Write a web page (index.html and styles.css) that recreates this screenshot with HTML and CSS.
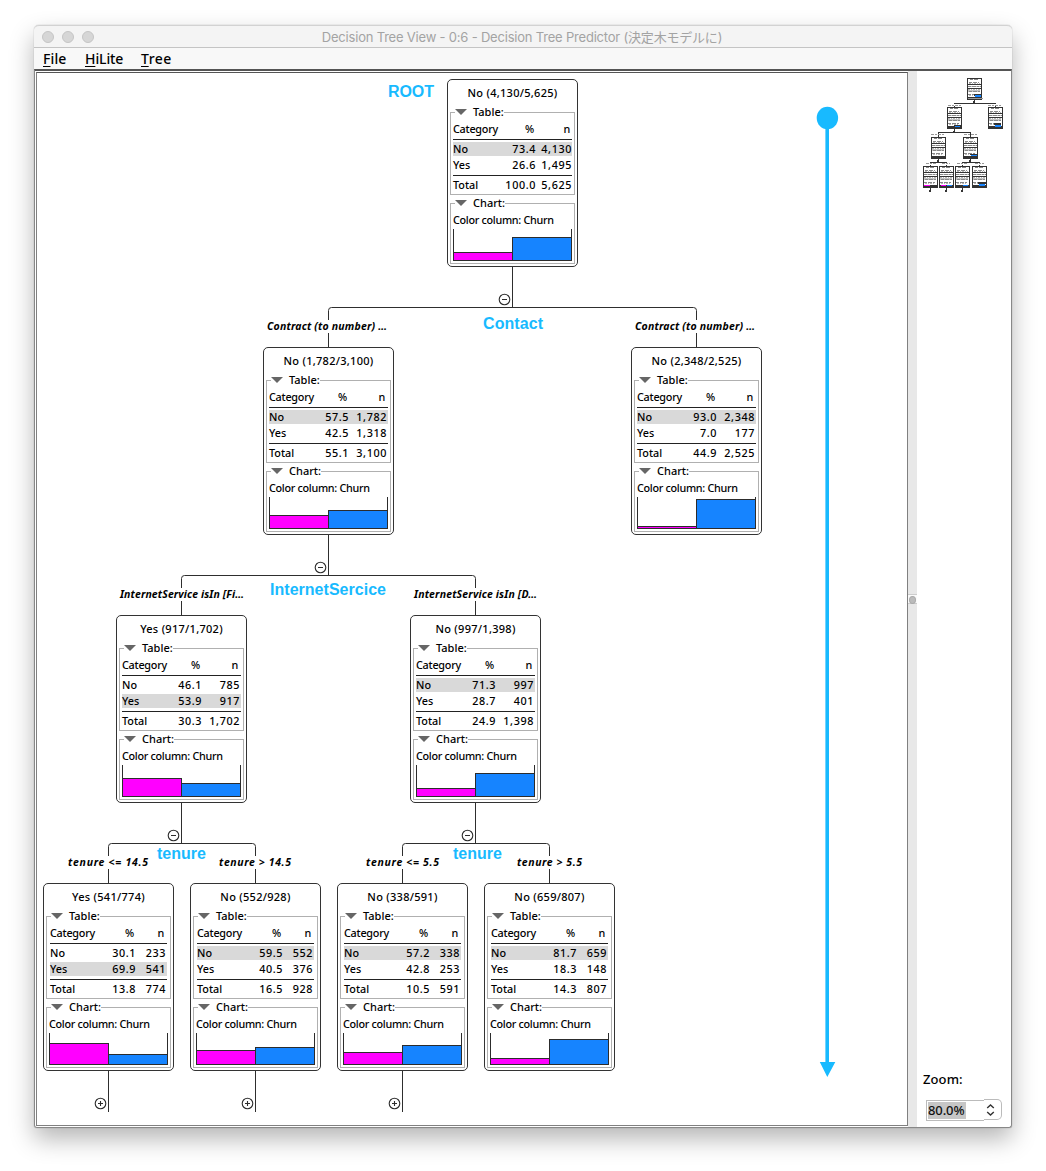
FILE: index.html
```html
<!DOCTYPE html>
<html lang="en">
<head>
<meta charset="utf-8">
<title>Decision Tree View</title>
<link rel="stylesheet" href="styles.css">
</head>
<body>
<div class="window">
  <header class="titlebar">
    <div class="lights"><i></i><i></i><i></i></div>
    <h1>Decision Tree View - 0:6 - Decision Tree Predictor (決定木モデルに)</h1>
  </header>
  <nav class="menubar">
    <span class="m-file"><u>F</u>ile</span><span class="m-hilite"><u>H</u>iLite</span><span class="m-tree"><u>T</u>ree</span>
  </nav>
  <div class="split">
    <main class="canvas">
      <svg class="edges" width="870" height="1052" viewBox="37 73 870 1052">
        <g class="wire">
          <path d="M512.5 267V307.500M328.500 347V310.500Q328.500 307.500 331.500 307.500H693.500Q696.500 307.500 696.500 310.500V347"/>
          <path d="M328.500 535V575.500M181.500 615V578.500Q181.500 575.500 184.500 575.500H472.500Q475.500 575.500 475.500 578.500V615"/>
          <path d="M181.500 803V843.500M108.500 883V846.500Q108.500 843.500 111.500 843.500H252.500Q255.500 843.500 255.500 846.500V883"/>
          <path d="M475.500 803V843.500M402.500 883V846.500Q402.500 843.500 405.500 843.500H546.500Q549.500 843.500 549.500 846.500V883"/>
          <path d="M108.500 1071V1112M255.500 1071V1112M402.500 1071V1112"/>
        </g>
        <g class="knob">
          <path d="M499.200 299.500a5.300 5.300 0 1 0 10.600 0a5.300 5.300 0 1 0-10.600 0M502 299.500h5"/>
          <path d="M315.200 567.500a5.300 5.300 0 1 0 10.600 0a5.300 5.300 0 1 0-10.600 0M318 567.500h5"/>
          <path d="M168.200 835.500a5.300 5.300 0 1 0 10.600 0a5.300 5.300 0 1 0-10.600 0M171 835.500h5"/>
          <path d="M462.200 835.500a5.300 5.300 0 1 0 10.600 0a5.300 5.300 0 1 0-10.600 0M465 835.500h5"/>
          <path d="M95.200 1103.500a5.300 5.300 0 1 0 10.600 0a5.300 5.300 0 1 0-10.600 0M98 1103.500h5M100.500 1101v5"/>
          <path d="M242.200 1103.500a5.300 5.300 0 1 0 10.600 0a5.300 5.300 0 1 0-10.600 0M245 1103.500h5M247.500 1101v5"/>
          <path d="M389.200 1103.500a5.300 5.300 0 1 0 10.600 0a5.300 5.300 0 1 0-10.600 0M392 1103.500h5M394.500 1101v5"/>
        </g>
        <path fill="#fff" d="M266 320h123v13h-123zM634 320h123v13h-123zM119 588h126v13h-126zM413 588h126v13h-126zM66 856h84v13h-84zM217 856h76v13h-76zM364 856h77v13h-77zM515 856h69v13h-69z"/>
        <g class="cond">
          <text x="267" y="330" textLength="120">Contract (to number) …</text>
          <text x="635" y="330" textLength="120">Contract (to number) …</text>
          <text x="120" y="598" textLength="124">InternetService isIn [Fi…</text>
          <text x="414" y="598" textLength="123">InternetService isIn [D…</text>
          <text x="68" y="866" textLength="80">tenure &lt;= 14.5</text>
          <text x="219" y="866" textLength="72">tenure &gt; 14.5</text>
          <text x="366" y="866" textLength="73">tenure &lt;= 5.5</text>
          <text x="517" y="866" textLength="65">tenure &gt; 5.5</text>
        </g>
        <g class="note">
          <text x="388" y="97" textLength="46">ROOT</text>
          <text x="483" y="329" textLength="60">Contact</text>
          <text x="270" y="595" textLength="116">InternetSercice</text>
          <text x="157" y="859" textLength="49">tenure</text>
          <text x="453" y="859" textLength="49">tenure</text>
          <ellipse cx="827.400" cy="118" rx="10.700" ry="11.200"/>
          <path d="M825.400 118h3.600v944h6.300L827.300 1077L819.800 1062h5.600z"/>
        </g>
      </svg>

      <article class="node root" style="left:410px;top:6px">
        <h2>No (4,130/5,625)</h2>
        <section><h3>Table:</h3>
          <div class="row head"><span>Category</span><span>%</span><span>n</span></div>
          <div class="row hit"><span>No</span><b>73.4</b><b>4,130</b></div>
          <div class="row"><span>Yes</span><b>26.6</b><b>1,495</b></div>
          <div class="row total"><span>Total</span><b>100.0</b><b>5,625</b></div>
        </section>
        <section><h3>Chart:</h3><p>Color column: Churn</p>
          <div class="chart"><i style="height:8px"></i><i style="height:23px"></i></div>
        </section>
      </article>

      <article class="node" style="left:226px;top:274px">
        <h2>No (1,782/3,100)</h2>
        <section><h3>Table:</h3>
          <div class="row head"><span>Category</span><span>%</span><span>n</span></div>
          <div class="row hit"><span>No</span><b>57.5</b><b>1,782</b></div>
          <div class="row"><span>Yes</span><b>42.5</b><b>1,318</b></div>
          <div class="row total"><span>Total</span><b>55.1</b><b>3,100</b></div>
        </section>
        <section><h3>Chart:</h3><p>Color column: Churn</p>
          <div class="chart"><i style="height:13px"></i><i style="height:18px"></i></div>
        </section>
      </article>

      <article class="node" style="left:594px;top:274px">
        <h2>No (2,348/2,525)</h2>
        <section><h3>Table:</h3>
          <div class="row head"><span>Category</span><span>%</span><span>n</span></div>
          <div class="row hit"><span>No</span><b>93.0</b><b>2,348</b></div>
          <div class="row"><span>Yes</span><b>7.0</b><b>177</b></div>
          <div class="row total"><span>Total</span><b>44.9</b><b>2,525</b></div>
        </section>
        <section><h3>Chart:</h3><p>Color column: Churn</p>
          <div class="chart"><i style="height:2px"></i><i style="height:29px"></i></div>
        </section>
      </article>

      <article class="node" style="left:79px;top:542px">
        <h2>Yes (917/1,702)</h2>
        <section><h3>Table:</h3>
          <div class="row head"><span>Category</span><span>%</span><span>n</span></div>
          <div class="row"><span>No</span><b>46.1</b><b>785</b></div>
          <div class="row hit"><span>Yes</span><b>53.9</b><b>917</b></div>
          <div class="row total"><span>Total</span><b>30.3</b><b>1,702</b></div>
        </section>
        <section><h3>Chart:</h3><p>Color column: Churn</p>
          <div class="chart"><i style="height:18px"></i><i style="height:13px"></i></div>
        </section>
      </article>

      <article class="node" style="left:373px;top:542px">
        <h2>No (997/1,398)</h2>
        <section><h3>Table:</h3>
          <div class="row head"><span>Category</span><span>%</span><span>n</span></div>
          <div class="row hit"><span>No</span><b>71.3</b><b>997</b></div>
          <div class="row"><span>Yes</span><b>28.7</b><b>401</b></div>
          <div class="row total"><span>Total</span><b>24.9</b><b>1,398</b></div>
        </section>
        <section><h3>Chart:</h3><p>Color column: Churn</p>
          <div class="chart"><i style="height:8px"></i><i style="height:23px"></i></div>
        </section>
      </article>

      <article class="node leaf" style="left:6px;top:810px">
        <h2>Yes (541/774)</h2>
        <section><h3>Table:</h3>
          <div class="row head"><span>Category</span><span>%</span><span>n</span></div>
          <div class="row"><span>No</span><b>30.1</b><b>233</b></div>
          <div class="row hit"><span>Yes</span><b>69.9</b><b>541</b></div>
          <div class="row total"><span>Total</span><b>13.8</b><b>774</b></div>
        </section>
        <section><h3>Chart:</h3><p>Color column: Churn</p>
          <div class="chart"><i style="height:21px"></i><i style="height:10px"></i></div>
        </section>
      </article>

      <article class="node leaf" style="left:153px;top:810px">
        <h2>No (552/928)</h2>
        <section><h3>Table:</h3>
          <div class="row head"><span>Category</span><span>%</span><span>n</span></div>
          <div class="row hit"><span>No</span><b>59.5</b><b>552</b></div>
          <div class="row"><span>Yes</span><b>40.5</b><b>376</b></div>
          <div class="row total"><span>Total</span><b>16.5</b><b>928</b></div>
        </section>
        <section><h3>Chart:</h3><p>Color column: Churn</p>
          <div class="chart"><i style="height:14px"></i><i style="height:17px"></i></div>
        </section>
      </article>

      <article class="node leaf" style="left:300px;top:810px">
        <h2>No (338/591)</h2>
        <section><h3>Table:</h3>
          <div class="row head"><span>Category</span><span>%</span><span>n</span></div>
          <div class="row hit"><span>No</span><b>57.2</b><b>338</b></div>
          <div class="row"><span>Yes</span><b>42.8</b><b>253</b></div>
          <div class="row total"><span>Total</span><b>10.5</b><b>591</b></div>
        </section>
        <section><h3>Chart:</h3><p>Color column: Churn</p>
          <div class="chart"><i style="height:12px"></i><i style="height:19px"></i></div>
        </section>
      </article>

      <article class="node leaf" style="left:447px;top:810px">
        <h2>No (659/807)</h2>
        <section><h3>Table:</h3>
          <div class="row head"><span>Category</span><span>%</span><span>n</span></div>
          <div class="row hit"><span>No</span><b>81.7</b><b>659</b></div>
          <div class="row"><span>Yes</span><b>18.3</b><b>148</b></div>
          <div class="row total"><span>Total</span><b>14.3</b><b>807</b></div>
        </section>
        <section><h3>Chart:</h3><p>Color column: Churn</p>
          <div class="chart"><i style="height:6px"></i><i style="height:25px"></i></div>
        </section>
      </article>
    </main>
    <div class="divider"><span></span></div>
    <aside class="side">
      <svg class="overview" width="94" height="130" viewBox="917 71 94 130" shape-rendering="crispEdges">
        <defs>
          <g id="mini">
            <path fill="#333" d="M0 0h15v22h-15z"/>
            <path fill="#fff" d="M1 1h13v5h-13zM1 7h13v3h-13zM1 11h13v8h-13z"/>
            <path fill="#c4c4c4" d="M1 8h13v1h-13zM1 12h12v2h-12z"/>
            <path stroke="#888" fill="none" stroke-dasharray="3 1 4 1 2 1" d="M3 1.500h9M2 4.500h10M1 8.500h13M2 13.500h11M1 16.500h12"/>
            <path stroke="#b8b8b8" fill="none" stroke-dasharray="2 1 1 1" d="M2 5.500h11M1 11.500h13M2 17.500h10"/>
          </g>
        </defs>
        <path fill="none" stroke="#333" d="M974.500 98v5M954 103.500h42M954.500 106v1M995.500 106v1"/>
        <path fill="#333" d="M954 129h1v3h-1zM953 131h2v1h-2zM938 132h33v1h-33zM938 133h1v4h-1zM970 133h1v4h-1zM973 101h2v2h-2zM938 158h1v4h-1zM970 158h1v4h-1zM930 162h17v1h-17zM962 162h18v1h-18zM930 165h1v1h-1zM946 165h1v1h-1zM962 165h1v1h-1zM979 165h1v1h-1zM937 160h2v2h-2zM969 160h2v2h-2zM930 188h1v3h-1zM929 190h2v2h-2zM946 188h1v3h-1zM945 190h2v2h-2zM962 188h1v3h-1zM961 190h2v2h-2z"/>
        <path stroke="#999" fill="none" stroke-dasharray="3 1 2 1" d="M948 105.500h13M988 105.500h14M931 134.500h14M964 134.500h14M926 163.500h10M942 163.500h8M957 163.500h10M975 163.500h9"/>
        <use href="#mini" x="967" y="78"/><path fill="#999" d="M968 98h15v1h-15z"/>
        <use href="#mini" x="947" y="107"/><use href="#mini" x="988" y="107"/>
        <use href="#mini" x="931" y="137"/><use href="#mini" x="963" y="137"/>
        <use href="#mini" x="923" y="166"/><use href="#mini" x="939" y="166"/><use href="#mini" x="955" y="166"/><use href="#mini" x="972" y="166"/>
        <path fill="#333" d="M974 94h8v2h-8zM954 125h7v1h-7zM994 123h7v2h-7zM970 154h7v1h-7zM978 182h8v2h-8z"/>
        <path fill="#1684ff" d="M975 95h6v2h-6zM955 126h5v1h-5zM995 125h6v2h-6zM971 155h6v1h-6zM947 185h5v1h-5zM963 185h5v1h-5zM979 184h6v2h-6z"/>
        <path fill="#f0f" d="M924 185h6v1h-6zM941 185h5v1h-5z"/>
      </svg>
      <div class="zoom">
        <label>Zoom:</label>
        <div class="spinner"><span class="field"><mark>80.0%</mark></span><span class="steps"><svg width="9" height="14" viewBox="0 0 9 14"><path d="M1.200 5L4.500 1.900L7.800 5M1.200 9L4.500 12.100L7.800 9"/></svg></span></div>
      </div>
    </aside>
  </div>
</div>
</body>
</html>
```
FILE: styles.css
```css
* { box-sizing: border-box; }
body {
  margin: 0;
  height: 1171px;
  padding: 25px 34px 43px;
  overflow: hidden;
  background: #fff;
  color: #000;
  font-family: "Noto Sans", "Noto Sans CJK JP", sans-serif;
}
h1, h2, h3, p { margin: 0; font-weight: 400; }
i, b { font-style: normal; font-weight: inherit; }

.window {
  display: flex;
  flex-direction: column;
  width: 978px;
  height: 1103px;
  border-radius: 5px 5px 3px 3px;
  background: #fff;
  box-shadow: 0 0 1px rgba(0,0,0,.45), 0 11px 24px rgba(0,0,0,.29);
}
.titlebar {
  display: flex;
  align-items: center;
  height: 23px;
  padding: 1px 8px 0;
  border-top: 1px solid #d2d2d2;
  border-bottom: 1px solid #c4c4c4;
  border-radius: 5px 5px 0 0;
  background: #f4f4f4;
}
.lights { display: flex; gap: 8px; width: 72px; }
.lights i { width: 12px; height: 12px; border: 1px solid #c5c5c5; border-radius: 50%; background: #d6d6d6; }
.titlebar h1 {
  flex: 1;
  padding-right: 74px;
  color: #a3a3a3;
  font: 13px/20px Inter, "Noto Sans CJK JP", sans-serif;
  letter-spacing: -.2px;
  text-align: center;
  white-space: nowrap;
}
.menubar {
  display: flex;
  gap: 18px;
  height: 21px;
  padding-left: 9px;
  background: #f8f8f8;
  font-size: 14px;
  line-height: 21px;
  font-weight: 500;
}
.menubar u { text-underline-offset: 2px; text-decoration-thickness: 1px; }
.m-file { width: 24px; letter-spacing: .1px; }
.m-hilite { width: 38px; letter-spacing: -.1px; }
.m-tree { letter-spacing: .5px; }
.split {
  display: flex;
  flex: 1;
  min-height: 0;
  border: 1px solid #888;
  border-top: 2px solid #555;
  border-radius: 0 0 3px 3px;
}
.canvas {
  position: relative;
  flex: none;
  width: 872px;
  margin: 1px 0 1px 1px;
  border: 1px solid #808080;
  border-top-color: #555;
}
.edges { position: absolute; left: 0; top: 0; }
.wire { fill: none; stroke: #2e2e2e; }
.knob { fill: none; stroke: #2e2e2e; stroke-width: 1.1; }
.cond { font-size: 10.5px; font-weight: 700; font-style: italic; fill: #000; }
.note { font: 700 16px "Liberation Sans", Arial, sans-serif; fill: #18baff; }

.node {
  --pct: 80px;
  position: absolute;
  display: flex;
  flex-direction: column;
  gap: 8px;
  width: 131px;
  height: 188px;
  padding: 0 2px;
  border: 1px solid #333;
  border-radius: 5px;
  background: #fff;
  font-size: 10.8px;
  font-weight: 500;
}
.root { --pct: 83px; }
.leaf { --pct: 86px; }
.node h2 {
  height: 24px;
  font-size: 11px;
  font-weight: 500;
  line-height: 26px;
  letter-spacing: .28px;
  text-align: center;
  white-space: nowrap;
}
.node section { border: 1px solid #b0b0b0; padding: 0 2px; }
.node section:nth-of-type(1) { height: 83px; }
.node section:nth-of-type(2) { height: 61px; }
.node h3 {
  display: flex;
  align-items: center;
  gap: 6px;
  width: max-content;
  height: 14px;
  margin: -8px 0 0 2px;
  background: #fff;
  font-size: 11px;
  font-weight: 500;
  line-height: 14px;
}
.node h3::before { content: ""; border: 6px solid transparent; border-top-color: #666; border-bottom: 0; }
.row {
  display: grid;
  grid-template-columns: 46px calc(var(--pct) - 46px) 1fr;
  height: 14px;
  margin-bottom: 2px;
  line-height: 14px;
}
.row > :nth-child(n+2) { text-align: right; }
.row b { letter-spacing: .6px; justify-self: end; white-space: nowrap; }
.row b:last-child { padding-right: 1px; }
.root .row b:last-child { padding-right: 0; }
.row.head { height: 21px; border-bottom: 1px solid #222; line-height: 20px; letter-spacing: -.25px; }
.row.head span + span { padding-right: 2px; }
.row.head span:last-child { padding-right: 3px; }
.root .row.head span:last-child { padding-right: 2px; }
.row.hit { background: #d9d9d9; }
.row.total { height: 19px; margin: 3px 0 0; border-top: 1px solid #222; line-height: 18px; }
.row:nth-last-child(2) { margin-bottom: 0; }
.node p { height: 19px; font-weight: 500; line-height: 20px; letter-spacing: -.3px; white-space: nowrap; }
.chart { display: flex; align-items: flex-end; height: 32px; border: 1px solid #2c2c2c; border-top: 0; }
.chart i { flex: none; width: 59px; border: solid #2c2c2c; border-width: 1px 1px 0 0; background: #f0f; }
.chart i + i { margin-left: -1px; border-width: 1px 0 0 1px; background: #1684ff; }
.leaf .row { margin-left: 1px; margin-right: 1px; }

.divider { display: flex; flex: none; align-items: center; width: 9px; background: #e8e8e8; }
.divider span { display: flex; width: 9px; height: 10px; background: #fafafa; border: solid #ccc; border-width: 1px 0; }
.divider span::before { content: ""; width: 6px; height: 6px; margin: 1px; border-radius: 50%; background: #bbb; border: 1px solid #aaa; }
.side { display: flex; flex: 1; min-width: 0; flex-direction: column; justify-content: space-between; }
.overview { display: block; }
.zoom { padding: 0 0 6px 6px; font-size: 13px; font-weight: 500; line-height: 18px; }
.zoom label { display: block; margin-bottom: 12px; letter-spacing: .1px; }
.spinner { display: flex; width: 76px; height: 21px; margin-left: 3px; }
.field { width: 58px; height: 21px; padding: 1px; border: 1px solid #bbb; border-right: 0; line-height: 17px; }
.field mark { display: block; width: 38px; height: 17px; background: #c6c6c6; color: #111; letter-spacing: -.1px; }
.steps {
  display: flex;
  align-items: center;
  width: 18px;
  height: 21px;
  margin-top: -1px;
  padding-left: 2px;
  border: 1px solid #bbb;
  border-left: 0;
  border-radius: 0 5px 5px 0;
}
.steps path { fill: none; stroke: #333; stroke-width: 1.400; }
```
